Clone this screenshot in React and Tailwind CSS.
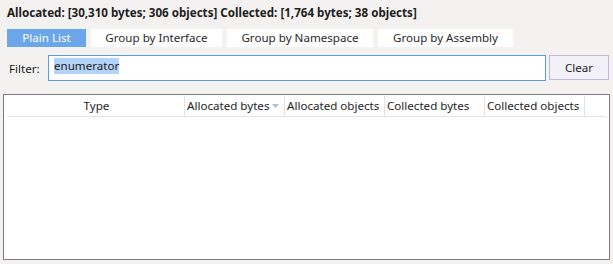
import React from "react";

const tabs = [
  { label: "Plain List", w: "w-[79px]", active: true },
  { label: "Group by Interface", w: "w-[131px]" },
  { label: "Group by Namespace", w: "w-[146px]" },
  { label: "Group by Assembly", w: "w-[135px]" },
];

const columns = [
  { label: "Type", w: "w-[178px]", center: true },
  { label: "Allocated bytes", w: "w-[100px]", sorted: true },
  { label: "Allocated objects", w: "w-[100px]" },
  { label: "Collected bytes", w: "w-[100px]" },
  { label: "Collected objects", w: "w-[100px]" },
];

const App = () => {
  return (
    <div
      className="w-[613px] h-[264px] bg-[#f3f2f1] text-[#1e1e1e] text-[11.6px] overflow-hidden"
      style={{ fontFamily: '"Noto Sans", "Open Sans", sans-serif' }}
    >
      <div className="pl-[7px] pt-[4px] h-[26px] font-bold leading-[18px]">
        Allocated: [30,310 bytes; 306 objects] Collected: [1,764 bytes; 38 objects]
      </div>
      <div className="flex gap-[5px] pl-[7px] mt-[3px]">
        {tabs.map((t) => (
          <div
            key={t.label}
            className={`${t.w} h-[18px] flex items-center justify-center leading-none ${
              t.active ? "bg-[#6aa6e8] text-white" : "bg-white text-[#2a2a2a]"
            }`}
          >
            {t.label}
          </div>
        ))}
      </div>
      <div className="flex items-center mt-[8px] h-[26px]">
        <div className="w-[48px] pl-[9px] pt-[2px]">Filter:</div>
        <div className="w-[498px] h-[26px] bg-white border border-[#569de5] pl-[5px] flex items-start pt-[2px]">
          <span className="bg-[#b3d4f8] leading-[16px]">enumerator</span>
        </div>
        <div className="ml-[3px] w-[60px] h-[25px] self-start bg-[#f2f0f8] border border-[#bfb9dc] flex items-center justify-center">
          Clear
        </div>
      </div>
      <div className="ml-[3px] mt-[13px] w-[607px] h-[166px] bg-white border border-[#7a7d85] pl-[3px] pt-[1px]">
        <div className="flex h-[21px] w-[598px] border-b border-[#e3e3e3]">
          {columns.map((c) => (
            <div
              key={c.label}
              className={`${c.w} h-full flex items-center border-r border-[#e3e3e3] pl-[2px] relative ${
                c.center ? "justify-center" : ""
              }`}
            >
              {c.label}
              {c.sorted && (
                <svg
                  className="absolute right-[5px] top-[8px]"
                  width="7"
                  height="4"
                  viewBox="0 0 7 4"
                >
                  <path d="M0 0 L7 0 L3.5 4 Z" fill="#a9bfd6" />
                </svg>
              )}
            </div>
          ))}
          <div className="flex-1 h-full" />
        </div>
      </div>
    </div>
  );
};

export default App;
